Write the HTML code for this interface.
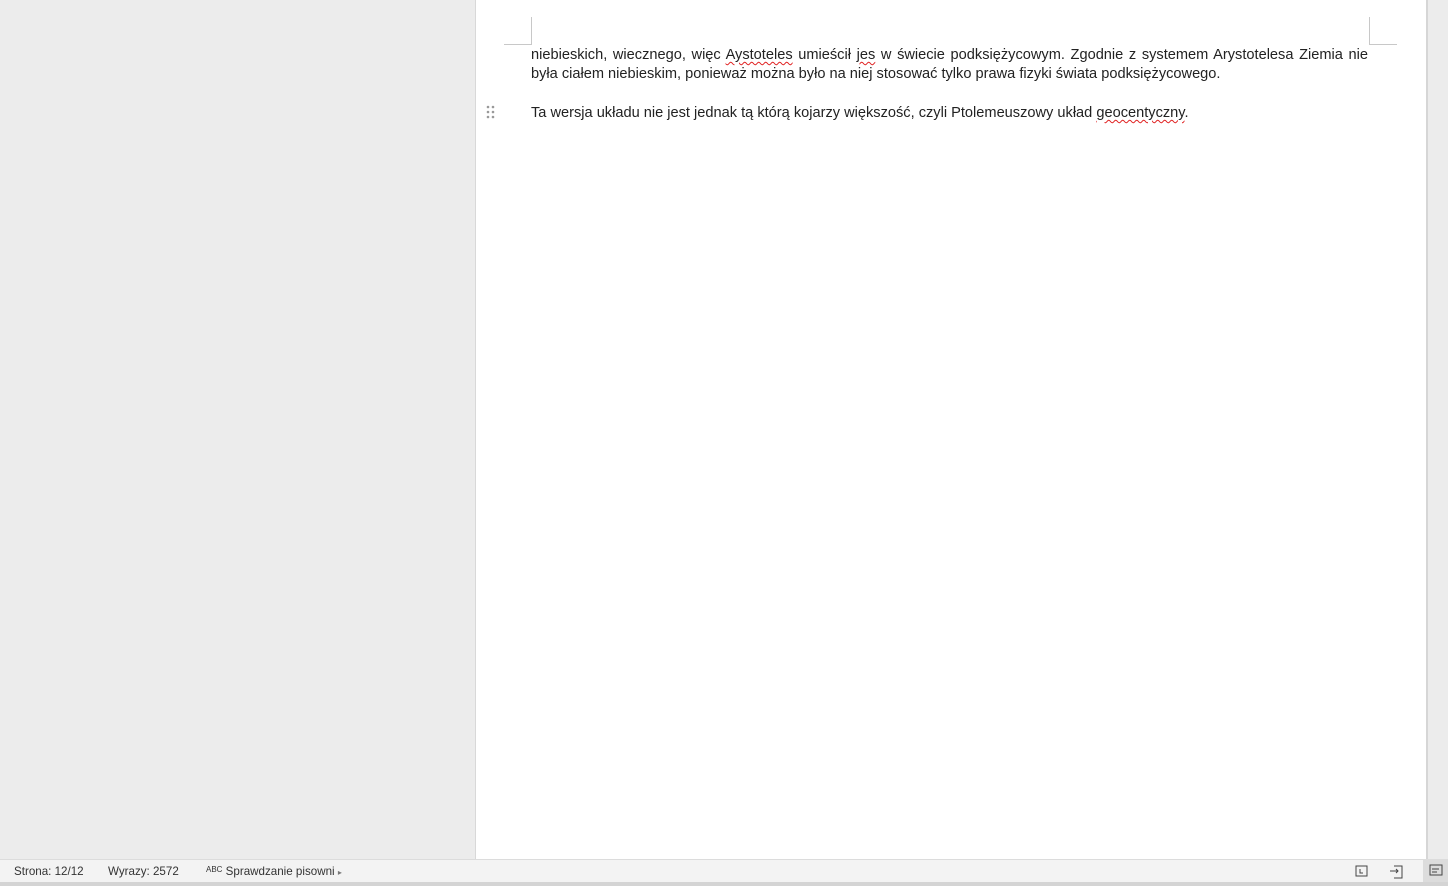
<!DOCTYPE html>
<html><head><meta charset="utf-8"><style>
body{margin:0;width:1448px;height:886px;background:#ececec;position:relative;overflow:hidden;font-family:"Liberation Sans",sans-serif}
.page{position:absolute;left:475px;top:0;width:951px;height:859px;background:#fff;border-left:1px solid #d8d8d8}
.rb{position:absolute;left:1426px;top:0;width:2px;height:859px;background:#d6d6d6}
.t{position:absolute;left:531px;font-size:14.6px;color:#222;white-space:nowrap;line-height:19px}
.j{width:837px;text-align:justify;text-align-last:justify;white-space:normal}
.sq{text-decoration:underline wavy #e02020;text-decoration-thickness:1px;text-underline-offset:2px}
.status{position:absolute;left:0;top:859px;width:1448px;height:23px;background:#f3f3f3;border-top:1px solid #dcdcdc;font-size:11.6px;color:#333}
.status span{position:absolute;top:5px}
.bot{position:absolute;left:0;top:882px;width:1448px;height:4px;background:#d4d4d4}
</style></head><body>
<div class="page"></div>
<div class="rb"></div>
<div style="position:absolute;left:531px;top:17px;width:1px;height:28px;background:#c8c8c8"></div>
<div style="position:absolute;left:504px;top:44px;width:28px;height:1px;background:#c8c8c8"></div>
<div style="position:absolute;left:1369px;top:17px;width:1px;height:28px;background:#c8c8c8"></div>
<div style="position:absolute;left:1369px;top:44px;width:28px;height:1px;background:#c8c8c8"></div>
<div class="t j" style="top:46px">niebieskich, wiecznego, więc <span class="sq">Aystoteles</span> umieścił <span class="sq">jes</span> w świecie podksiężycowym. Zgodnie z systemem Arystotelesa Ziemia nie</div>
<div class="t" style="top:65px">była ciałem niebieskim, ponieważ można było na niej stosować tylko prawa fizyki świata podksiężycowego.</div>
<div class="t" style="top:104px">Ta wersja układu nie jest jednak tą którą kojarzy większość, czyli Ptolemeuszowy układ <span class="sq">geocentyczny</span>.</div>
<svg style="position:absolute;left:486px;top:105px" width="10" height="15"><g fill="#999"><circle cx="2" cy="2" r="1.3"/><circle cx="7" cy="2" r="1.3"/><circle cx="2" cy="7" r="1.3"/><circle cx="7" cy="7" r="1.3"/><circle cx="2" cy="12" r="1.3"/><circle cx="7" cy="12" r="1.3"/></g></svg>
<div class="status">
<span style="left:14px">Strona: 12/12</span>
<span style="left:108px">Wyrazy: 2572</span>
<span style="left:206px"><span style="position:static;font-size:8px;vertical-align:top">ABC</span> Sprawdzanie pisowni <span style="position:static;font-size:8px;color:#777">&#9656;</span></span>
<svg style="position:absolute;left:1355px;top:4px" width="14" height="14"><rect x="1" y="2" width="11" height="10" fill="none" stroke="#444"/><path d="M5 5v4h3" fill="none" stroke="#444"/></svg>
<svg style="position:absolute;left:1389px;top:3px" width="16" height="16"><path d="M5 3h8v12H5M1 8h8M7 6l2 2-2 2" fill="none" stroke="#444"/></svg>
<div style="position:absolute;left:1423px;top:0;width:25px;height:23px;background:#dcdcdc"></div>
<svg style="position:absolute;left:1429px;top:4px" width="14" height="14"><rect x="1" y="1" width="12" height="10" fill="none" stroke="#444"/><path d="M3 5h7M3 8h5" stroke="#444"/></svg>
</div>
<div class="bot"></div>
</body></html>
